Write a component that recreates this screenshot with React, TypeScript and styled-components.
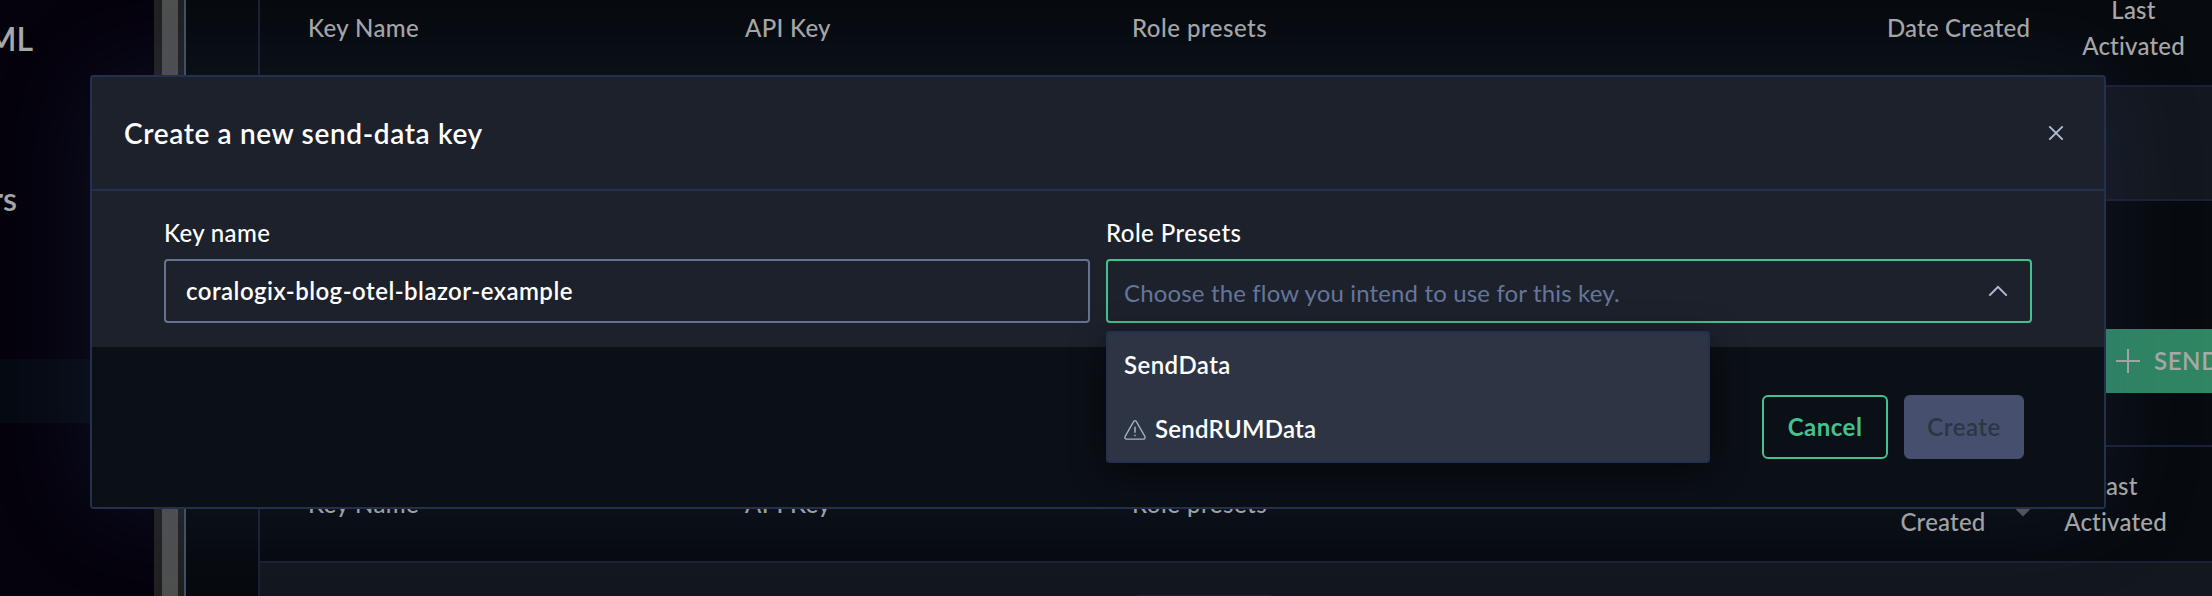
import React from "react";
import styled, { createGlobalStyle } from "styled-components";

const GlobalStyle = createGlobalStyle`
  *, *::before, *::after { box-sizing: border-box; }
  html, body { margin: 0; height: 100%; background: #070a0e; overflow: hidden; }
  body { font-family: Lato, "Liberation Sans", sans-serif; font-size: 24px; color: #fff; }
  button, input { font: inherit; letter-spacing: inherit; color: inherit; margin: 0; }
`;

const Page = styled.div`
  position: relative;
  display: flex;
  height: 596px;
  overflow: hidden;
  background: #070a0e;
`;

/* ---------- side navigation ---------- */

const Sidebar = styled.nav`
  flex: 0 0 154px;
  display: flex;
  flex-direction: column;
  padding-top: 6px;
  background: #05020c;
  color: #a9a9a9;
`;

const NavItem = styled.div<{ $width?: number; $gap?: number; $active?: boolean }>`
  flex: 0 0 64px;
  display: flex;
  justify-content: flex-end;
  align-items: center;
  width: ${(p) => (p.$width ? `${p.$width}px` : "100%")};
  margin-bottom: ${(p) => p.$gap ?? 0}px;
  font-size: 32px;
  font-weight: 600;
  background: ${(p) => (p.$active ? "#060a12" : "transparent")};
`;

const ScrollTrack = styled.div`
  flex: 0 0 32px;
  display: flex;
  padding: 0 6px 0 8px;
  background: #212121;
  border-right: 2px solid #444f66;
`;

const ScrollThumb = styled.div`
  flex: 1;
  background: #4f4f4f;
`;

/* ---------- key tables ---------- */

const Main = styled.main`
  flex: 1;
  min-width: 0;
  display: flex;
  flex-direction: column;
  padding-left: 72px;
  color: #a9a9a9;
`;

const Table = styled.section<{ $first?: boolean }>`
  flex: none;
  margin-top: ${(p) => (p.$first ? "-31px" : "0")};
  border: 2px solid #1a2136;
  border-right: 0;
`;

const HeadRow = styled.div<{ $columns: string }>`
  display: grid;
  grid-template-columns: ${(p) => p.$columns};
  align-items: center;
  height: 114px;
  padding-left: 48px;
  line-height: 36px;
  font-weight: 500;
`;

const HeadCell = styled.div<{ $center?: boolean; $spacing?: number }>`
  text-align: ${(p) => (p.$center ? "center" : "left")};
  letter-spacing: ${(p) => p.$spacing ?? 0.4}px;
  white-space: pre-line;
`;

const SortIcon = styled.svg`
  display: block;
  justify-self: center;
`;

const BodyRow = styled.div`
  height: 114px;
  padding: 32px 0 0 875px;
  border-top: 2px solid #1a2136;
  background: #13171e;
`;

const Chip = styled.div`
  width: 138px;
  height: 48px;
  border-radius: 4px;
  background: #1f2433;
`;

const Toolbar = styled.div`
  flex: none;
  display: flex;
  justify-content: flex-end;
  padding: 128px 0 52px;
`;

const AddButton = styled.button`
  flex: none;
  display: flex;
  align-items: center;
  width: 212px;
  height: 64px;
  padding: 0 0 0 116px;
  border: 0;
  gap: 14px;
  background: #2f8663;
  white-space: nowrap;
  overflow: hidden;
`;

const PlusIcon = styled.svg`
  flex: none;
  display: block;
`;

const ButtonText = styled.span`
  padding-bottom: 1px;
  font-weight: 600;
  letter-spacing: 0.6px;
`;

/* ---------- dialog ---------- */

const Overlay = styled.div`
  position: absolute;
  inset: 0;
  padding: 75px 106px 0 90px;
`;

const Dialog = styled.div`
  height: 434px;
  display: flex;
  flex-direction: column;
  border: 2px solid #25304e;
  border-radius: 4px;
  background: #1c212c;
  box-shadow: 0 0 100px rgba(56, 80, 135, 0.2);
`;

const DialogHeader = styled.header`
  flex: 0 0 114px;
  display: flex;
  justify-content: space-between;
  align-items: center;
  padding: 0 40px 0 32px;
  border-bottom: 2px solid #25304e;
`;

const Title = styled.h2`
  margin: 0;
  font-size: 28px;
  font-weight: 600;
  letter-spacing: 0.64px;
`;

const CloseButton = styled.button`
  display: flex;
  padding: 0;
  border: 0;
  background: none;
`;

const Fields = styled.div`
  flex: 0 0 156px;
  display: grid;
  grid-template-columns: 1fr 1fr;
  column-gap: 16px;
  padding: 24px 72px 0;
`;

const Field = styled.div`
  position: relative;
  display: flex;
  flex-direction: column;
`;

const Label = styled.label<{ $spacing: number }>`
  height: 44px;
  line-height: 35px;
  font-weight: 500;
  letter-spacing: ${(p) => p.$spacing}px;
`;

const TextInput = styled.input`
  width: 100%;
  height: 64px;
  padding: 0 20px 2px;
  border: 2px solid #65738f;
  border-radius: 4px;
  outline: 0;
  background: transparent;
  font-weight: 600;
  letter-spacing: 0.47px;
`;

const SelectBox = styled.div`
  display: flex;
  justify-content: space-between;
  align-items: center;
  height: 64px;
  padding: 0 22px 0 16px;
  border: 2px solid #45c08f;
  border-radius: 4px;
`;

const Placeholder = styled.span`
  padding-top: 3px;
  color: #65769a;
  letter-spacing: 0.15px;
`;

const Menu = styled.ul`
  position: absolute;
  top: 116px;
  left: 0;
  width: 604px;
  margin: 0;
  padding: 0;
  list-style: none;
  border: 2px solid #25304e;
  border-radius: 4px;
  background: #2d3544;
  box-shadow: 0 8px 32px rgba(0, 0, 0, 0.5);
`;

const Option = styled.li<{ $spacing: number }>`
  display: flex;
  align-items: center;
  gap: 9px;
  height: 64px;
  padding: 0 16px 2px;
  font-weight: 600;
  letter-spacing: ${(p) => p.$spacing}px;
`;

const WarningIcon = styled.svg`
  flex: none;
  margin-top: 3px;
`;

const DialogFooter = styled.footer`
  flex: 1;
  display: flex;
  justify-content: flex-end;
  align-items: center;
  gap: 16px;
  padding-right: 80px;
  background: #0b0f16;
`;

const ActionButton = styled.button<{ $primary?: boolean }>`
  width: ${(p) => (p.$primary ? 120 : 126)}px;
  height: 64px;
  padding: 0 0 1px;
  border: 2px solid ${(p) => (p.$primary ? "#46506e" : "#45c08f")};
  border-radius: 6px;
  background: ${(p) => (p.$primary ? "#46506e" : "transparent")};
  color: ${(p) => (p.$primary ? "#2d3544" : "#45c08f")};
  font-weight: ${(p) => (p.$primary ? 600 : 700)};
  letter-spacing: 0.5px;
`;

export default function App() {
  return (
    <Page>
      <GlobalStyle />
      <Sidebar>
        <NavItem $width={33} $gap={96}>ML</NavItem>
        <NavItem $width={17} $gap={129}>rs</NavItem>
        <NavItem $active />
      </Sidebar>
      <ScrollTrack>
        <ScrollThumb />
      </ScrollTrack>

      <Main>
        <Table $first>
          <HeadRow $columns="437px 387px 703px 247px 103px">
            <HeadCell>Key Name</HeadCell>
            <HeadCell $spacing={0.3}>API Key</HeadCell>
            <HeadCell $spacing={0.5}>Role presets</HeadCell>
            <HeadCell $center $spacing={0.2}>Date Created</HeadCell>
            <HeadCell $center $spacing={0.2}>{"Last\nActivated"}</HeadCell>
          </HeadRow>
          <BodyRow />
        </Table>

        <Toolbar>
          <AddButton>
            <PlusIcon width="24" height="24" viewBox="0 0 24 24" stroke="#a9a9a9" strokeWidth="2">
              <path d="M12 0V24M0 12H24" />
            </PlusIcon>
            <ButtonText>SEND</ButtonText>
          </AddButton>
        </Toolbar>

        <Table>
          <HeadRow $columns="437px 387px 756px 110px 50px 135px">
            <HeadCell>Key Name</HeadCell>
            <HeadCell $spacing={0.3}>API Key</HeadCell>
            <HeadCell $spacing={0.5}>Role presets</HeadCell>
            <HeadCell $center $spacing={0.2}>{"Date\nCreated"}</HeadCell>
            <SortIcon width="20" height="28" viewBox="0 0 20 28" fill="#555">
              <path d="M10 0L19 9H1ZM1 17.5H19L10 26.5Z" />
            </SortIcon>
            <HeadCell $center $spacing={0.2}>{"Last\nActivated"}</HeadCell>
          </HeadRow>
          <BodyRow>
            <Chip />
          </BodyRow>
        </Table>
      </Main>

      <Overlay>
        <Dialog role="dialog">
          <DialogHeader>
            <Title>Create a new send-data key</Title>
            <CloseButton aria-label="Close">
              <svg width="16" height="16" viewBox="0 0 16 16" stroke="#b3bcd4" strokeWidth="1.9">
                <path d="M1.3 1.3L14.7 14.7M14.7 1.3L1.3 14.7" />
              </svg>
            </CloseButton>
          </DialogHeader>

          <Fields>
            <Field>
              <Label $spacing={0.35}>Key name</Label>
              <TextInput defaultValue="coralogix-blog-otel-blazor-example" />
            </Field>
            <Field>
              <Label $spacing={0.45}>Role Presets</Label>
              <SelectBox>
                <Placeholder>Choose the flow you intend to use for this key.</Placeholder>
                <svg width="20" height="12" viewBox="0 0 20 12" fill="none" stroke="#b3bcd4" strokeWidth="2">
                  <path d="M1.3 10.6L10 1.9L18.7 10.6" />
                </svg>
              </SelectBox>
              <Menu>
                <Option $spacing={0.45}>SendData</Option>
                <Option $spacing={0.25}>
                  <WarningIcon width="22" height="20" viewBox="0 0 22 20" fill="none" stroke="#a9b4c4" strokeWidth="1.3" strokeLinejoin="round" strokeLinecap="round">
                    <path d="M9.6 1.6Q11 -.2 12.4 1.6L21 16.6Q21.6 19 19.4 19.2H2.6Q.4 19 1 16.6Z" />
                    <path d="M11 7.2V12.2M11 15.2V15.6" strokeWidth="1.5" />
                  </WarningIcon>
                  SendRUMData
                </Option>
              </Menu>
            </Field>
          </Fields>

          <DialogFooter>
            <ActionButton>Cancel</ActionButton>
            <ActionButton $primary>Create</ActionButton>
          </DialogFooter>
        </Dialog>
      </Overlay>
    </Page>
  );
}
